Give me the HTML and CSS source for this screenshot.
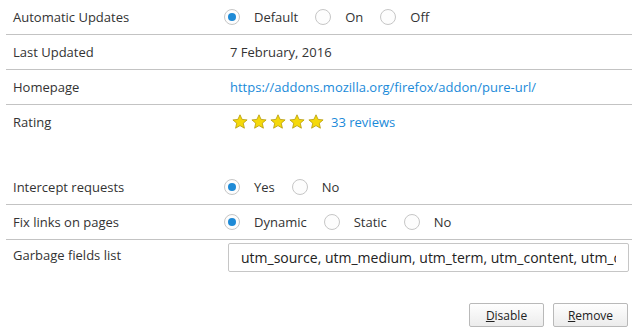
FILE: index.html
```html
<!DOCTYPE html>
<html lang="en">
<head>
    <meta charset="UTF-8">
    <title>Pure URL preferences</title>
    <link rel="stylesheet" href="styles.css">
</head>
<body>
    <div class="prefs">
        <div class="row">
            <div class="label">Automatic Updates</div>
            <div class="value radios">
                <label class="radio"><span class="dot checked"></span>Default</label>
                <label class="radio"><span class="dot"></span>On</label>
                <label class="radio"><span class="dot"></span>Off</label>
            </div>
        </div>
        <div class="row">
            <div class="label">Last Updated</div>
            <div class="value text">7 February, 2016</div>
        </div>
        <div class="row">
            <div class="label">Homepage</div>
            <div class="value text"><a href="#">https://addons.mozilla.org/firefox/addon/pure-url/</a></div>
        </div>
        <div class="row last">
            <div class="label">Rating</div>
            <div class="value text rating">
                <span class="stars">
                    <svg class="star" viewBox="0 0 16 16"><path d="M8 0.8 L10.1 5.4 L15.1 5.9 L11.3 9.2 L12.4 14.2 L8 11.6 L3.6 14.2 L4.7 9.2 L0.9 5.9 L5.9 5.4 Z"/></svg>
                    <svg class="star" viewBox="0 0 16 16"><path d="M8 0.8 L10.1 5.4 L15.1 5.9 L11.3 9.2 L12.4 14.2 L8 11.6 L3.6 14.2 L4.7 9.2 L0.9 5.9 L5.9 5.4 Z"/></svg>
                    <svg class="star" viewBox="0 0 16 16"><path d="M8 0.8 L10.1 5.4 L15.1 5.9 L11.3 9.2 L12.4 14.2 L8 11.6 L3.6 14.2 L4.7 9.2 L0.9 5.9 L5.9 5.4 Z"/></svg>
                    <svg class="star" viewBox="0 0 16 16"><path d="M8 0.8 L10.1 5.4 L15.1 5.9 L11.3 9.2 L12.4 14.2 L8 11.6 L3.6 14.2 L4.7 9.2 L0.9 5.9 L5.9 5.4 Z"/></svg>
                    <svg class="star" viewBox="0 0 16 16"><path d="M8 0.8 L10.1 5.4 L15.1 5.9 L11.3 9.2 L12.4 14.2 L8 11.6 L3.6 14.2 L4.7 9.2 L0.9 5.9 L5.9 5.4 Z"/></svg>
                </span>
                <a href="#">33 reviews</a>
            </div>
        </div>

        <div class="settings">
            <div class="row">
                <div class="label">Intercept requests</div>
                <div class="value radios">
                    <label class="radio"><span class="dot checked"></span>Yes</label>
                    <label class="radio"><span class="dot"></span>No</label>
                </div>
            </div>
            <div class="row">
                <div class="label">Fix links on pages</div>
                <div class="value radios">
                    <label class="radio"><span class="dot checked"></span>Dynamic</label>
                    <label class="radio"><span class="dot"></span>Static</label>
                    <label class="radio"><span class="dot"></span>No</label>
                </div>
            </div>
            <div class="row last field-row">
                <div class="label">Garbage fields list</div>
                <div class="value">
                    <input class="field" type="text" value="utm_source, utm_medium, utm_term, utm_content, utm_campaign, utm_reader, utm_place">
                </div>
            </div>
        </div>

        <div class="actions">
            <button><u>D</u>isable</button>
            <button><u>R</u>emove</button>
        </div>
    </div>
</body>
</html>
```

FILE: styles.css
```css
body {
    margin: 0;
    padding: 0 8px 0 6px;
    background-color: #ffffff;
    font-family: "Open Sans", "Noto Sans", sans-serif;
    font-size: 13px;
    color: #333333;
}

.row {
    box-sizing: border-box;
    display: flex;
    align-items: center;
    height: 35px;
    padding-bottom: 1px;
    border-bottom: 1px solid #c3c3c3;
}

.row.last {
    border-bottom: none;
}

.label {
    box-sizing: border-box;
    width: 218px;
    padding-left: 7px;
}

.value.text {
    padding-left: 6px;
}

.radios {
    display: flex;
    align-items: center;
}

.radio {
    display: flex;
    align-items: center;
    margin-right: 17px;
}

.dot {
    box-sizing: border-box;
    width: 16px;
    height: 16px;
    border: 1px solid #c6c6c6;
    border-radius: 50%;
    margin-right: 14px;
    background: #fdfdfd;
    position: relative;
}

.dot.checked::after {
    content: "";
    position: absolute;
    left: 3px;
    top: 3px;
    width: 8px;
    height: 8px;
    border-radius: 50%;
    background: #1e8ad6;
}

a {
    color: #1a8ad9;
    text-decoration: none;
}

.rating {
    display: flex;
    align-items: center;
}

.stars {
    display: flex;
    margin-left: 2px;
    margin-right: 4px;
}

.star {
    width: 16px;
    height: 16px;
    margin-right: 3px;
    fill: #f5d90a;
    stroke: #b59a08;
    stroke-width: 0.8;
}

.settings {
    margin-top: 30px;
}

.field-row {
    align-items: flex-start;
    height: 36px;
}

.field-row .label {
    padding-top: 6px;
}

.field-row .value {
    padding-top: 3px;
    padding-left: 4px;
}

.field {
    box-sizing: border-box;
    width: 401px;
    height: 29px;
    border: 1px solid #c6c6c6;
    border-radius: 2px;
    padding: 0 12px;
    font-family: "Open Sans", "Noto Sans", sans-serif;
    font-size: 14px;
    color: #222222;
}

.actions {
    display: flex;
    justify-content: flex-end;
    gap: 9px;
    margin-top: 27px;
    padding-right: 4px;
}

button {
    width: 75px;
    height: 24px;
    border: 1px solid #b9b9b9;
    border-radius: 2px;
    background: linear-gradient(#fefefe, #ececec);
    font-family: "Open Sans", "Noto Sans", sans-serif;
    font-size: 12px;
    color: #222222;
    padding: 0;
}
```
